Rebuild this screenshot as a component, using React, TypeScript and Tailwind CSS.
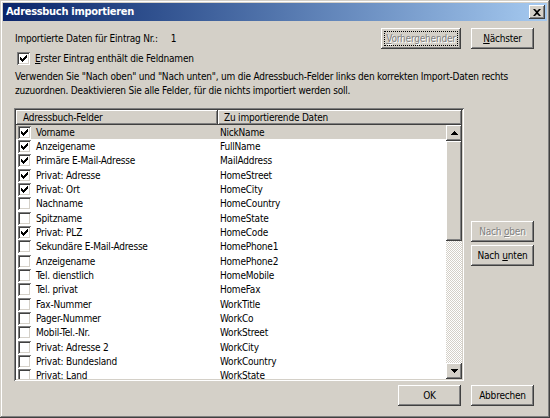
import React from 'react';

const raised =
  'shadow-[inset_-1px_-1px_#404040,inset_1px_1px_#ffffff,inset_-2px_-2px_#808080,inset_2px_2px_#d4d0c8]';
const sunken =
  'shadow-[inset_1px_1px_#808080,inset_-1px_-1px_#ffffff,inset_2px_2px_#404040,inset_-2px_-2px_#d4d0c8]';
const disabledText = 'text-[#808080] [text-shadow:1px_1px_0_#ffffff]';

const rows: [string, string, boolean][] = [
  ['Vorname', 'NickName', true],
  ['Anzeigename', 'FullName', true],
  ['Primäre E-Mail-Adresse', 'MailAddress', true],
  ['Privat: Adresse', 'HomeStreet', true],
  ['Privat: Ort', 'HomeCity', true],
  ['Nachname', 'HomeCountry', false],
  ['Spitzname', 'HomeState', false],
  ['Privat: PLZ', 'HomeCode', true],
  ['Sekundäre E-Mail-Adresse', 'HomePhone1', false],
  ['Anzeigename', 'HomePhone2', false],
  ['Tel. dienstlich', 'HomeMobile', false],
  ['Tel. privat', 'HomeFax', false],
  ['Fax-Nummer', 'WorkTitle', false],
  ['Pager-Nummer', 'WorkCo', false],
  ['Mobil-Tel.-Nr.', 'WorkStreet', false],
  ['Privat: Adresse 2', 'WorkCity', false],
  ['Privat: Bundesland', 'WorkCountry', false],
  ['Privat: Land', 'WorkState', false],
];

function CheckBox({ checked }: { checked: boolean }) {
  return (
    <span className={`w-[13px] h-[13px] bg-white shrink-0 flex items-center justify-center ${sunken}`}>
      {checked && (
        <svg width="7" height="7" viewBox="0 0 7 7">
          <path d="M0 2h1v1h1v1h1V3h1V2h1V1h1V0h1v3H6v1H5v1H4v1H3v1H2V6H1V5H0z" fill="#000" />
        </svg>
      )}
    </span>
  );
}

function Button({
  children,
  w,
  disabled,
  focused,
}: {
  children: React.ReactNode;
  w: string;
  disabled?: boolean;
  focused?: boolean;
}) {
  return (
    <div className={`${w} h-[21px] bg-[#d4d0c8] flex items-center justify-center p-[3px] ${raised}`}>
      <div
        className={`w-full h-full flex items-center justify-center whitespace-nowrap ${
          focused ? 'outline-1 outline-dotted outline-black -outline-offset-1' : ''
        } ${disabled ? disabledText : 'text-black'}`}
      >
        {children}
      </div>
    </div>
  );
}

function Arrow({ up }: { up?: boolean }) {
  return (
    <div className={`w-[16px] h-[16px] bg-[#d4d0c8] flex items-center justify-center shrink-0 ${raised}`}>
      <svg width="7" height="4" viewBox="0 0 7 4" className={up ? '' : 'rotate-180'}>
        <path d="M3 0h1v1h1v1h1v1h1v1H0V3h1V2h1V1h1z" fill="#000" />
      </svg>
    </div>
  );
}

export default function App() {
  return (
    <div
      className="w-[550px] h-[418px] bg-[#d4d0c8] p-[3px] flex flex-col text-[10px] tracking-[-0.2px] text-black shadow-[inset_-1px_-1px_#404040,inset_1px_1px_#d4d0c8,inset_-2px_-2px_#808080,inset_2px_2px_#ffffff]"
      style={{ fontFamily: '"DejaVu Sans Condensed", "Liberation Sans", Arial, sans-serif' }}
    >
      {/* title bar */}
      <div className="h-[18px] flex items-center pl-[3px] pr-[2px] bg-gradient-to-r from-[#0a246a] to-[#a6caf0]">
        <span className="text-white font-bold text-[11px] tracking-[-0.3px]">Adressbuch importieren</span>
        <div className={`ml-auto w-[16px] h-[14px] bg-[#d4d0c8] flex items-center justify-center ${raised}`}>
          <svg width="8" height="7" viewBox="0 0 8 7">
            <path d="M0 0h2l2 2 2-2h2L5 3.5 8 7H6L4 5 2 7H0l3-3.5z" fill="#000" />
          </svg>
        </div>
      </div>

      {/* record navigation */}
      <div className="mt-[7px] h-[21px] flex items-center pl-[12px] pr-[13px]">
        <span>Importierte Daten für Eintrag Nr.:</span>
        <span className="ml-[13px]">1</span>
        <div className="ml-auto flex gap-[10px]">
          <Button w="w-[80px]" disabled focused>
            <span>
              <span className="underline">V</span>orhergehender
            </span>
          </Button>
          <Button w="w-[63px]">
            <span>
              <span className="underline">N</span>ächster
            </span>
          </Button>
        </div>
      </div>

      <div className="mt-[3px] h-[13px] flex items-center pl-[14px] gap-[5px]">
        <CheckBox checked />
        <span>
          <span className="underline">E</span>rster Eintrag enthält die Feldnamen
        </span>
      </div>

      <p className="mt-[5px] pl-[12px] pr-[20px] leading-[14px]">
        Verwenden Sie "Nach oben" und "Nach unten", um die Adressbuch-Felder links den korrekten Import-Daten rechts
        zuzuordnen. Deaktivieren Sie alle Felder, für die nichts importiert werden soll.
      </p>

      {/* list + side buttons */}
      <div className="mt-[10px] flex pl-[11px] pr-[13px]">
        <div className={`w-[450px] h-[273px] bg-white p-[2px] flex flex-col ${sunken}`}>
          <div className="h-[15px] flex shrink-0">
            <div className={`w-[202px] h-full bg-[#d4d0c8] flex items-center pl-[7px] ${raised}`}>
              Adressbuch-Felder
            </div>
            <div className={`flex-1 h-full bg-[#d4d0c8] flex items-center pl-[6px] ${raised}`}>
              Zu importierende Daten
            </div>
          </div>
          <div className="flex flex-1 min-h-0">
            <div className="flex-1 overflow-hidden">
              {rows.map(([field, data, checked], i) => (
                <div
                  key={i}
                  className={`h-[14.33px] flex items-center ${i === 0 ? 'bg-[#d4d0c8]' : ''}`}
                >
                  <div className="w-[202px] flex items-center pl-[2px] gap-[5px] shrink-0">
                    <CheckBox checked={checked} />
                    <span className="whitespace-nowrap">{field}</span>
                  </div>
                  <span className="pl-[2px] whitespace-nowrap">{data}</span>
                </div>
              ))}
            </div>
            <div className="w-[16px] flex flex-col bg-[image:repeating-conic-gradient(#d4d0c8_0_25%,#ffffff_0_50%)] bg-[length:2px_2px]">
              <Arrow up />
              <div className={`h-[100px] bg-[#d4d0c8] shrink-0 ${raised}`} />
              <div className="flex-1" />
              <Arrow />
            </div>
          </div>
        </div>
        <div className="ml-auto pt-[113px] flex flex-col gap-[3px]">
          <Button w="w-[63px]" disabled>
            <span>
              Nach <span className="underline">o</span>ben
            </span>
          </Button>
          <Button w="w-[63px]">
            <span>
              Nach <span className="underline">u</span>nten
            </span>
          </Button>
        </div>
      </div>

      {/* dialog buttons */}
      <div className="mt-[4px] flex justify-end gap-[10px] pr-[13px]">
        <Button w="w-[63px]">OK</Button>
        <Button w="w-[63px]">Abbrechen</Button>
      </div>
    </div>
  );
}
